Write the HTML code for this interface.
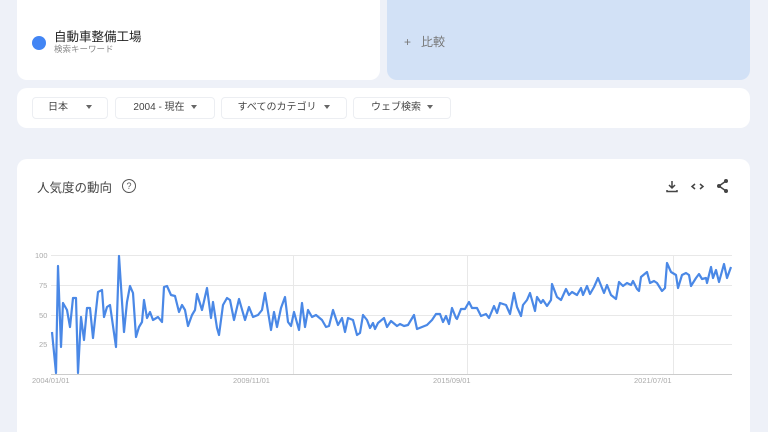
<!DOCTYPE html>
<html style="width:768px;height:432px;overflow:hidden"><head><meta charset="utf-8"><style>
*{margin:0;padding:0;box-sizing:border-box}
body{width:768px;height:432px;overflow:hidden;background:#eef1f8;font-family:"Liberation Sans","Noto Sans CJK JP",sans-serif;position:relative}
.card{position:absolute;background:#fff;border-radius:10px}
.btn{position:absolute;top:97px;height:22px;border:1px solid #eceef2;border-radius:4px;font-size:10px;color:#444;line-height:20px;text-align:center}
.tri{display:inline-block;width:0;height:0;border-left:3px solid transparent;border-right:3px solid transparent;border-top:4px solid #666;margin-left:8px;vertical-align:middle}
.lbl{position:absolute;font-size:7.5px;color:#aaa}
</style></head><body>
<div class="card" style="left:17px;top:-10px;width:363px;height:90px"></div>
<div style="position:absolute;left:32px;top:36px;width:14px;height:14px;border-radius:50%;background:#4285f4"></div>
<div style="position:absolute;left:54px;top:26px;font-size:12.5px;color:#222">自動車整備工場</div>
<div style="position:absolute;left:54px;top:43px;font-size:8.5px;color:#888">検索キーワード</div>
<div class="card" style="left:387px;top:-10px;width:363px;height:90px;background:#d2e1f6"></div>
<div style="position:absolute;left:404px;top:33px;font-size:12px;color:#777">+&nbsp;&nbsp;&nbsp;比較</div>
<div class="card" style="left:17px;top:88px;width:733px;height:40px"></div>
<div class="btn" style="left:32px;width:76px">日本<span class="tri" style="margin-left:18px"></span></div>
<div class="btn" style="left:115px;width:100px">2004 - 現在<span class="tri" style="margin-left:6px"></span></div>
<div class="btn" style="left:221px;width:126px">すべてのカテゴリ<span class="tri"></span></div>
<div class="btn" style="left:353px;width:98px">ウェブ検索<span class="tri" style="margin-left:6px"></span></div>
<div class="card" style="left:17px;top:159px;width:733px;height:290px"></div>
<div style="position:absolute;left:37px;top:177px;font-size:12.5px;color:#444">人気度の動向</div>
<div style="position:absolute;left:122px;top:179px;width:14px;height:14px;border:1.3px solid #555;border-radius:50%;font-size:9px;line-height:12px;text-align:center;color:#555">?</div>
<svg style="position:absolute;left:0;top:0" width="768" height="432">
<g stroke="#444" stroke-width="1.5" fill="none">
<path d="M672 181v7M669 185l3 3 3-3M667 190v1.5h10V190"/>
<path d="M695 184l-3 2.5 3 2.5M700 184l3 2.5-3 2.5"/>
<path d="M726 181l-7 5 7 5"/>
</g>
<g fill="#444"><circle cx="726" cy="181" r="2"/><circle cx="719" cy="186" r="2"/><circle cx="726" cy="191" r="2"/></g>
<g stroke="#e8e8e8" stroke-width="1">
<path d="M51 255.5H732M51 285.5H732M51 315.5H732M51 344.5H732M293.5 255V374M467.5 255V374M673.5 255V374"/>
</g>
<path d="M51 374.5H732" stroke="#ccc"/>
<polyline fill="none" stroke="#4a88e6" stroke-width="2.2" stroke-linejoin="round" points="52,332 56,373 58,266 61,347 63,303 67,310 70,327 73,298 76,298 78,373 81,317 84,340 87,308 90,308 93,338 98,292 102,290 104,317 107,307 110,305 116,347 119,256 124,332 127,302 130,286 133,293 136,337 139,327 142,322 144,300 147,318 150,312 153,320 158,317 162,322 164,287 167,286 171,295 175,296 179,312 182,305 185,310 188,326 192,315 195,310 197,294 202,310 207,288 211,318 213,302 217,328 219,335 223,305 227,298 230,300 234,320 239,299 245,320 249,307 253,317 258,315 262,310 265,293 271,330 274,312 277,327 281,308 285,297 288,322 291,326 294,312 299,330 302,303 305,327 308,310 312,317 316,315 322,320 326,327 329,326 333,310 338,325 342,318 345,332 348,318 353,320 357,335 360,333 363,315 367,320 370,328 373,323 375,329 378,323 384,318 387,327 391,321 397,326 400,324 404,326 408,325 414,315 417,329 422,327 427,325 432,320 436,314 440,314 443,322 446,316 449,324 452,308 456,318 457,319 461,309 465,309 469,302 472,308 477,308 481,316 486,314 489,318 494,306 497,313 500,303 506,305 510,314 514,293 517,307 521,316 523,305 527,300 530,293 535,311 537,297 541,303 543,300 547,306 551,300 552,284 557,297 561,300 566,289 569,295 572,292 577,295 581,288 583,295 587,286 590,294 594,287 598,278 604,293 607,285 611,295 616,299 619,282 623,286 627,283 631,285 633,281 637,289 639,291 641,277 647,272 650,283 654,281 657,283 662,291 665,288 667,263 671,272 676,275 678,288 682,275 686,273 689,275 691,286 696,278 699,274 702,279 706,278 707,283 711,267 713,278 716,270 719,282 724,264 727,278 731,267"/>
</svg>
<div class="lbl" style="left:35px;top:251px">100</div>
<div class="lbl" style="left:39px;top:281px">75</div>
<div class="lbl" style="left:39px;top:311px">50</div>
<div class="lbl" style="left:39px;top:340px">25</div>
<div class="lbl" style="left:32px;top:376px">2004/01/01</div>
<div class="lbl" style="left:233px;top:376px">2009/11/01</div>
<div class="lbl" style="left:433px;top:376px">2015/09/01</div>
<div class="lbl" style="left:634px;top:376px">2021/07/01</div>
</body></html>
